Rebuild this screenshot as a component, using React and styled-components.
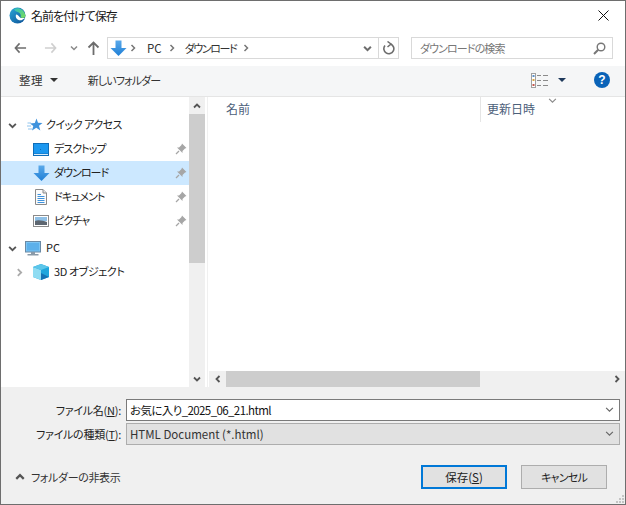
import React from 'react'
import styled, { createGlobalStyle } from 'styled-components'

const Global = createGlobalStyle`
  html, body { margin: 0; padding: 0; background: #1d2a3f; }
  body {
    font-family: "Noto Sans CJK JP", "Noto Sans", sans-serif;
    font-size: 12px;
    color: #1a1a1a;
    font-feature-settings: "palt";
  }
  * { box-sizing: border-box; }
`

const Window = styled.div`
  width: 626px;
  height: 505px;
  display: flex;
  flex-direction: column;
  background: #fff;
  border: 1px solid #6e6e6e;
  overflow: hidden;
  position: relative;
`

const TitleBar = styled.div`
  height: 29px;
  display: flex;
  align-items: center;
  padding: 0 0 0 8px;
  flex: none;
`

const Title = styled.div`
  margin-left: 5px;
  font-size: 12px;
  letter-spacing: -1px;
  flex: 1;
  line-height: 30px;
`

const CloseBtn = styled.div`
  width: 46px;
  height: 29px;
  display: flex;
  align-items: center;
  justify-content: center;
  padding-left: 3px;
`

const NavBar = styled.div`
  height: 36px;
  display: flex;
  align-items: flex-start;
  padding: 7px 12px 0 0;
  flex: none;
`

const NavButtons = styled.div`
  width: 106px;
  height: 22px;
  display: flex;
  align-items: center;
  padding-left: 13px;
  flex: none;
`

const NavIcon = styled.span`
  display: flex;
  width: ${p => p.$w}px;
  justify-content: flex-start;
`

const AddressBox = styled.div`
  width: 292px;
  height: 22px;
  border: 1px solid #d9d9d9;
  display: flex;
  align-items: center;
  flex: none;
  color: #333;
`

const Crumbs = styled.div`
  flex: 1;
  display: flex;
  align-items: center;
  padding-left: 2px;
  gap: 2px;
`

const CrumbText = styled.span`
  font-size: ${p => p.$size || 11.5}px;
  letter-spacing: ${p => p.$sp || 0};
  margin: 0 4px 0 ${p => p.$ml}px;
  padding-bottom: 1px;
`

const DropPart = styled.div`
  width: 21px;
  height: 20px;
  display: flex;
  align-items: center;
  justify-content: center;
`

const RefreshPart = styled.div`
  width: 20px;
  height: 20px;
  border-left: 1px solid #d9d9d9;
  display: flex;
  align-items: center;
  justify-content: center;
`

const SearchBox = styled.div`
  margin-left: 12px;
  width: 202px;
  height: 22px;
  border: 1px solid #d9d9d9;
  display: flex;
  align-items: center;
  justify-content: space-between;
  padding: 0 6px 0 8px;
  color: #777;
  font-size: 11px;
  letter-spacing: -0.9px;
`

const Toolbar = styled.div`
  height: 31px;
  background: #f5f6f7;
  border-bottom: 1px solid #e5e5e5;
  display: flex;
  align-items: center;
  padding: 0 15px 2px 18px;
  flex: none;
  color: #333;
`

const ToolText = styled.span`
  font-size: ${p => p.$size || 11.5}px;
  letter-spacing: ${p => p.$sp || 0};
`

const Caret = styled.span`
  display: inline-block;
  width: 0;
  height: 0;
  border-left: 4px solid transparent;
  border-right: 4px solid transparent;
  border-top: 4px solid ${p => p.$c || '#333'};
  margin-left: ${p => p.$ml || 7}px;
`

const NewFolder = styled(ToolText)`
  margin-left: 30px;
  flex: 1;
`

const Help = styled.span`
  width: 16px;
  height: 16px;
  border-radius: 50%;
  background: #0a63b8;
  color: #fff;
  font: bold 12px/16px "Liberation Sans", sans-serif;
  text-align: center;
  margin-left: 28px;
`

const Main = styled.div`
  flex: 1;
  display: flex;
  min-height: 0;
`

const NavPane = styled.div`
  width: 188px;
  padding-top: 16px;
  flex: none;
`

const Row = styled.div`
  height: 24px;
  margin-top: ${p => p.$gap || 0}px;
  display: flex;
  align-items: center;
  background: ${p => p.$selected ? '#cce8ff' : 'transparent'};
  padding-left: ${p => p.$indent}px;
  color: #222;
`

const Twisty = styled.span`
  width: 16px;
  display: flex;
  justify-content: center;
  flex: none;
  margin-right: ${p => p.$mr || 0}px;
`

const RowIcon = styled.span`
  width: 18px;
  height: 18px;
  display: flex;
  align-items: center;
  justify-content: center;
  flex: none;
  margin-right: ${p => p.$mr ?? 4}px;
`

const RowLabel = styled.span`
  font-size: 11px;
  letter-spacing: ${p => p.$sp || '-0.95px'};
  flex: 1;
  padding-bottom: 2px;
`

const Pin = styled.span`
  display: flex;
  margin-right: 2px;
`

const VScroll = styled.div`
  width: 16px;
  background: #f0f0f0;
  display: flex;
  flex-direction: column;
  flex: none;
`

const ScrollArrow = styled.div`
  height: ${p => p.$size || 16}px;
  width: ${p => p.$wide ? 17 : 'auto'}px;
  display: flex;
  align-items: center;
  justify-content: center;
  flex: none;
`

const VThumb = styled.div`
  height: 149px;
  background: #cdcdcd;
  flex: none;
`

const VTrack = styled.div`
  flex: 1;
`

const FilePane = styled.div`
  flex: 1;
  min-width: 0;
  display: flex;
  flex-direction: column;
  margin-left: 2px;
  border-left: 1px solid #f0f0f0;
`

const ColumnHeader = styled.div`
  height: 25px;
  display: flex;
  flex: none;
  color: #4c607a;
  position: relative;
`

const Col = styled.div`
  width: ${p => p.$w}px;
  padding: 0 0 2px ${p => p.$pl}px;
  display: flex;
  align-items: center;
  font-size: 12px;
  border-right: ${p => p.$line ? '1px solid #e5e5e5' : 'none'};
`

const SortMark = styled.span`
  position: absolute;
  top: -1px;
  left: 340px;
  display: flex;
`

const FileList = styled.div`
  flex: 1;
`

const HScroll = styled.div`
  height: 16px;
  margin-left: 1px;
  background: #f0f0f0;
  display: flex;
  flex: none;
`

const HThumb = styled.div`
  width: 254px;
  background: #cdcdcd;
  flex: none;
`

const HTrack = styled.div`
  flex: 1;
`

const Footer = styled.div`
  height: 117px;
  background: #f0f0f0;
  padding: 12px 5px 0 0;
  flex: none;
`

const FieldRow = styled.div`
  display: flex;
  align-items: center;
  height: 22px;
  margin-bottom: 2px;
`

const FieldLabel = styled.div`
  width: 125px;
  padding: 0 5px 1px 0;
  text-align: right;
  font-size: 11px;
  letter-spacing: -0.25px;
  color: #222;
  flex: none;
`

const Field = styled.div`
  flex: 1;
  height: 22px;
  border: 1px solid ${p => p.$disabled ? '#adadad' : '#7a7a7a'};
  background: ${p => p.$disabled ? '#e1e1e1' : '#fff'};
  display: flex;
  align-items: center;
  justify-content: space-between;
  padding: 0 5px 1px 3px;
  font-size: 11.5px;
  letter-spacing: ${p => p.$disabled ? '0' : '-0.6px'};
  color: ${p => p.$disabled ? '#333' : '#111'};
`

const ActionRow = styled.div`
  display: flex;
  align-items: center;
  margin-top: 20px;
  height: 24px;
`

const HideFolders = styled.div`
  flex: 1;
  display: flex;
  align-items: center;
  padding: 0 0 1px 14px;
  gap: 6px;
  font-size: 11px;
  letter-spacing: -0.35px;
  color: #333;
`

const Button = styled.div`
  width: 86px;
  height: 24px;
  display: flex;
  align-items: center;
  justify-content: center;
  padding-bottom: 1px;
  background: #e1e1e1;
  border: ${p => p.$primary ? '2px solid #0078d7' : '1px solid #adadad'};
  margin-left: 14px;
  font-size: ${p => p.$primary ? 11.5 : 11}px;
  letter-spacing: ${p => p.$primary ? 0 : '-0.8px'};
  color: #222;
`

const ButtonGap = styled.div`
  width: 13px;
  flex: none;
`

const Grip = styled.svg`
  position: absolute;
  right: 1px;
  bottom: 1px;
`

const Chevron = ({ dir = 'down', size = 8, color = '#666', w = 1.5 }) => {
  const paths = {
    down: 'M1 2.5 L4 5.5 L7 2.5',
    up: 'M1 5.5 L4 2.5 L7 5.5',
    left: 'M5.5 1 L2.5 4 L5.5 7',
    right: 'M2.5 1 L5.5 4 L2.5 7',
  }
  return (
    <svg width={size} height={size} viewBox="0 0 8 8">
      <path d={paths[dir]} fill="none" stroke={color} strokeWidth={w} />
    </svg>
  )
}

const ArrowLeft = ({ color, flip }) => (
  <svg width="13" height="12" viewBox="0 0 14 12" style={flip ? { transform: 'scaleX(-1)' } : undefined}>
    <path d="M6 1 L1.5 6 L6 11 M2 6 H13" fill="none" stroke={color} strokeWidth="1.7" />
  </svg>
)

const ArrowUp = () => (
  <svg width="13" height="14" viewBox="0 0 13 14">
    <path d="M1.5 6.5 L6.5 1.5 L11.5 6.5 M6.5 2 V14" fill="none" stroke="#6d6d6d" strokeWidth="1.8" />
  </svg>
)

const DownloadIcon = ({ size = 17 }) => (
  <svg width={size} height={size} viewBox="0 0 17 17">
    <defs>
      <linearGradient id="dl" x1="0" y1="0" x2="0" y2="1">
        <stop offset="0" stopColor="#5aa9ea" />
        <stop offset="1" stopColor="#1f7fd6" />
      </linearGradient>
    </defs>
    <path d="M5.5 0.5 H11.5 V8 H16.5 L8.5 16 L0.5 8 H5.5 Z" fill="url(#dl)" />
  </svg>
)

const EdgeIcon = () => (
  <svg width="17" height="17" viewBox="0 0 17 17">
    <defs>
      <linearGradient id="edgeA" x1="0" y1="0" x2="1" y2="1">
        <stop offset="0" stopColor="#2aa7d8" />
        <stop offset="1" stopColor="#0c4f96" />
      </linearGradient>
      <linearGradient id="edgeB" x1="0" y1="0" x2="1" y2="1">
        <stop offset="0" stopColor="#2fc0c0" />
        <stop offset="1" stopColor="#7bdc55" />
      </linearGradient>
    </defs>
    <circle cx="8.5" cy="8.5" r="8" fill="url(#edgeA)" />
    <path d="M5 2 C9 0 15 2 16.5 8.5 C16.5 11 14 11.5 11.5 10.5 C12.5 8 11 5.5 8.5 5 C7 4.5 5.5 3.5 5 2 Z" fill="url(#edgeB)" />
    <path d="M7 7.5 C6 11 8.5 13.8 12.5 13.2 L16.2 11 C14.5 10.8 12 11.5 11 10.5 C10 9 8.5 7.5 7 7.5 Z" fill="#fff" />
  </svg>
)

const RefreshIcon = () => (
  <svg width="13" height="14" viewBox="0 0 13 14">
    <path d="M8.5 3 A5 5 0 1 1 3 4.5" fill="none" stroke="#6d6d6d" strokeWidth="1.6" />
    <path d="M5.5 0.5 L9 3 L5.5 6" fill="none" stroke="#6d6d6d" strokeWidth="1.5" />
  </svg>
)

const SearchIcon = () => (
  <svg width="13" height="13" viewBox="0 0 13 13">
    <circle cx="8" cy="5" r="3.8" fill="none" stroke="#777" strokeWidth="1.4" />
    <path d="M5.2 7.8 L1 12" stroke="#777" strokeWidth="2" />
  </svg>
)

const ViewIcon = () => (
  <svg width="17" height="15" viewBox="0 0 17 15">
    <rect x="0.5" y="0.5" width="4" height="14" fill="#fff" stroke="#a0a0a0" />
    <rect x="1.5" y="2" width="2" height="2" fill="#5b8fc7" />
    <rect x="1.5" y="6" width="2" height="2" fill="#d9a441" />
    <rect x="1.5" y="11" width="2" height="2" fill="#c4574e" />
    <path d="M6 2.5 H10 M12 2.5 H17 M6 7.5 H10 M12 7.5 H17 M6 12.5 H10 M12 12.5 H17" stroke="#8b8b8b" />
  </svg>
)

const PinIcon = () => (
  <svg width="12" height="12" viewBox="0 0 12 12">
    <path d="M7 0.5 L11.5 5 L10 5.5 L7.5 8 L7.5 10 L2 4.5 L4 4.5 L6.5 2 Z" fill="#a6a6a6" />
    <path d="M4 8 L1 11" stroke="#a6a6a6" strokeWidth="1.3" />
  </svg>
)

const StarIcon = () => (
  <svg width="16" height="14" viewBox="0 0 16 14">
    <path d="M9.5 0.5 L11 4.8 L15.5 5 L12 7.8 L13.3 12.5 L9.3 9.8 L5 12.5 L6.3 8 L3 5.5 L7.8 5 Z" fill="#3f93dd" />
    <path d="M0.5 5 H4 M0 8 H4 M1 11 H5" stroke="#8fc4ee" />
  </svg>
)

const DesktopIcon = () => (
  <svg width="16" height="13" viewBox="0 0 16 13">
    <rect x="0" y="0" width="16" height="13" fill="#0f6db8" />
    <rect x="1" y="1" width="14" height="9.5" fill="#1c98f0" />
    <rect x="1" y="11" width="14" height="1" fill="#d8ecfb" />
    <rect x="7" y="6" width="1" height="1" fill="#0f6db8" />
  </svg>
)

const DocIcon = () => (
  <svg width="12" height="16" viewBox="0 0 12 16">
    <path d="M0.5 0.5 H8 L11.5 4 V15.5 H0.5 Z" fill="#fbfbfb" stroke="#8a8a8a" />
    <path d="M2.5 5.5 H6 M2.5 7.5 H9.5 M2.5 9.5 H9.5 M2.5 11.5 H9.5 M2.5 13.5 H9.5" stroke="#3f93dd" />
    <path d="M8 0.5 V4 H11.5" fill="#e4e4e4" stroke="#8a8a8a" />
  </svg>
)

const PictureIcon = () => (
  <svg width="16" height="12" viewBox="0 0 16 12">
    <rect x="0.5" y="0.5" width="15" height="11" fill="#fff" stroke="#8a8a8a" />
    <rect x="2" y="2" width="12" height="4" fill="#8fc0e6" />
    <path d="M2 6 C6 4.5 10 6 14 7 V10 H2 Z" fill="#5d6670" />
  </svg>
)

const MonitorIcon = () => (
  <svg width="16" height="15" viewBox="0 0 16 15">
    <rect x="0.5" y="0.5" width="15" height="10.5" fill="#7cc4f3" stroke="#6a8aa5" />
    <rect x="2" y="2" width="12" height="7.5" fill="#5db0ea" />
    <rect x="6" y="11" width="4" height="2" fill="#8a9aa8" />
    <rect x="2.5" y="13" width="11" height="1.5" fill="#8a9aa8" />
  </svg>
)

const CubeIcon = () => (
  <svg width="16" height="16" viewBox="0 0 16 16">
    <path d="M8 0 L16 3 V13 L8 16 L0 13 V3 Z" fill="#1fa6dc" />
    <path d="M0 3 L8 6 V16 L0 13 Z" fill="#8fdcf2" />
    <path d="M8 0 L16 3 L8 6 L0 3 Z" fill="#5cc6ea" />
    <path d="M8 9 L16 13 L8 16 Z" fill="#1473b5" />
  </svg>
)

const navItems = [
  { label: 'デスクトップ', icon: <DesktopIcon /> },
  { label: 'ダウンロード', icon: <DownloadIcon />, selected: true },
  { label: 'ドキュメント', icon: <DocIcon /> },
  { label: 'ピクチャ', icon: <PictureIcon /> },
]

export default function App() {
  return (
    <>
      <Global />
      <Window>
        <TitleBar>
          <EdgeIcon />
          <Title>名前を付けて保存</Title>
          <CloseBtn>
            <svg width="11" height="11" viewBox="0 0 11 11">
              <path d="M0.5 0.5 L10.5 10.5 M10.5 0.5 L0.5 10.5" stroke="#111" strokeWidth="1" />
            </svg>
          </CloseBtn>
        </TitleBar>

        <NavBar>
          <NavButtons>
            <NavIcon $w={30}><ArrowLeft color="#6d6d6d" /></NavIcon>
            <NavIcon $w={26}><ArrowLeft color="#cfcfcf" flip /></NavIcon>
            <NavIcon $w={17}><Chevron color="#8a8a8a" /></NavIcon>
            <NavIcon $w={14}><ArrowUp /></NavIcon>
          </NavButtons>
          <AddressBox>
            <Crumbs>
              <DownloadIcon />
              <Chevron dir="right" color="#777" />
              <CrumbText $ml={8}>PC</CrumbText>
              <Chevron dir="right" color="#777" />
              <CrumbText $ml={7} $size={11} $sp="-1.4px">ダウンロード</CrumbText>
              <Chevron dir="right" color="#777" />
            </Crumbs>
            <DropPart><Chevron color="#6d6d6d" w={1.8} size={9} /></DropPart>
            <RefreshPart><RefreshIcon /></RefreshPart>
          </AddressBox>
          <SearchBox>
            <span>ダウンロードの検索</span>
            <SearchIcon />
          </SearchBox>
        </NavBar>

        <Toolbar>
          <ToolText $sp="0.4px">整理</ToolText>
          <Caret />
          <NewFolder $size={11} $sp="-0.9px">新しいフォルダー</NewFolder>
          <ViewIcon />
          <Caret $c="#1e395b" $ml={10} />
          <Help>?</Help>
        </Toolbar>

        <Main>
          <NavPane>
            <Row $indent={3}>
              <Twisty $mr={6}><Chevron color="#555" w={1.6} size={9} /></Twisty>
              <RowIcon $mr={2}><StarIcon /></RowIcon>
              <RowLabel $sp="-0.5px">クイック アクセス</RowLabel>
            </Row>
            {navItems.map(item => (
              <Row key={item.label} $indent={31} $selected={item.selected}>
                <RowIcon>{item.icon}</RowIcon>
                <RowLabel>{item.label}</RowLabel>
                <Pin><PinIcon /></Pin>
              </Row>
            ))}
            <Row $indent={3} $gap={3}>
              <Twisty $mr={4}><Chevron color="#555" w={1.6} size={9} /></Twisty>
              <RowIcon><MonitorIcon /></RowIcon>
              <RowLabel $sp="0">PC</RowLabel>
            </Row>
            <Row $indent={10}>
              <Twisty $mr={5}><Chevron dir="right" color="#aaa" w={1.6} size={9} /></Twisty>
              <RowIcon $mr={4}><CubeIcon /></RowIcon>
              <RowLabel $sp="-0.4px">3D オブジェクト</RowLabel>
            </Row>
          </NavPane>

          <VScroll>
            <ScrollArrow $size={17}><Chevron dir="up" color="#555" w={1.8} /></ScrollArrow>
            <VThumb />
            <VTrack />
            <ScrollArrow><Chevron color="#555" w={1.8} /></ScrollArrow>
          </VScroll>

          <FilePane>
            <ColumnHeader>
              <Col $w={273} $pl={18} $line>名前</Col>
              <Col $w={140} $pl={6}>更新日時</Col>
              <SortMark><Chevron color="#8a8a8a" w={1} size={9} /></SortMark>
            </ColumnHeader>
            <FileList />
            <HScroll>
              <ScrollArrow $wide><Chevron dir="left" color="#555" w={1.8} /></ScrollArrow>
              <HThumb />
              <HTrack />
              <ScrollArrow $wide><Chevron dir="right" color="#555" w={1.8} /></ScrollArrow>
            </HScroll>
          </FilePane>
        </Main>

        <Footer>
          <FieldRow>
            <FieldLabel>ファイル名(<u>N</u>):</FieldLabel>
            <Field>
              <span>お気に入り_2025_06_21.html</span>
              <Chevron color="#666" w={1} size={9} />
            </Field>
          </FieldRow>
          <FieldRow>
            <FieldLabel>ファイルの種類(<u>T</u>):</FieldLabel>
            <Field $disabled>
              <span>HTML Document (*.html)</span>
              <Chevron color="#666" w={1} size={9} />
            </Field>
          </FieldRow>
          <ActionRow>
            <HideFolders>
              <Chevron dir="up" color="#555" w={1.8} size={10} />
              <span>フォルダーの非表示</span>
            </HideFolders>
            <Button $primary>保存(<u>S</u>)</Button>
            <Button>キャンセル</Button>
            <ButtonGap />
          </ActionRow>
        </Footer>
        <Grip width="9" height="9" viewBox="0 0 9 9">
          <path d="M7 1h2v2H7z M4 4h2v2H4z M7 4h2v2H7z M1 7h2v2H1z M4 7h2v2H4z M7 7h2v2H7z" fill="#c4c4c4" />
        </Grip>
      </Window>
    </>
  )
}
